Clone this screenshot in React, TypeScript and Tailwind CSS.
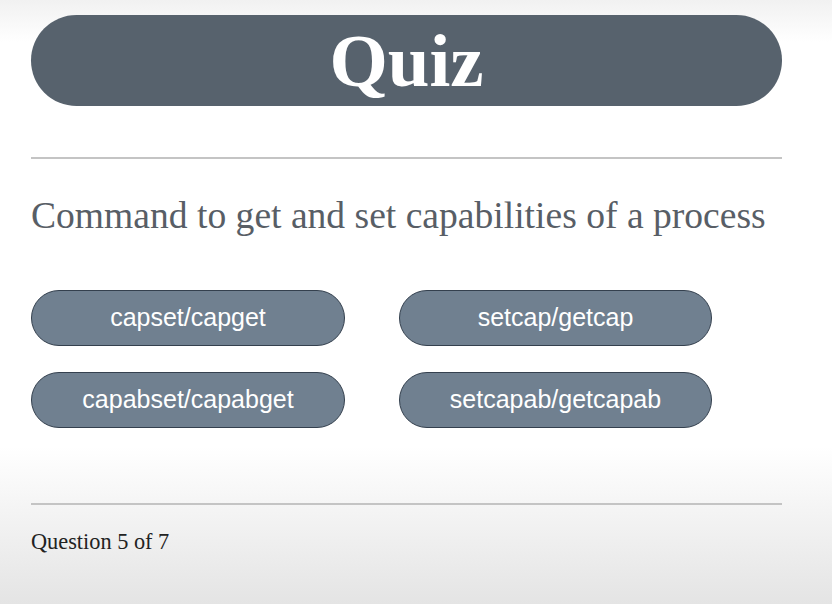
import React from "react";

const answers = [
  "capset/capget",
  "setcap/getcap",
  "capabset/capabget",
  "setcapab/getcapab",
];

export default function App() {
  return (
    <div className="w-[832px] h-[604px] overflow-hidden pl-[31px] pr-[50px] bg-[linear-gradient(to_bottom,#f1f1f1_0%,#ffffff_7%,#ffffff_74%,#e4e4e4_100%)]">
      <div className="mt-[15px] h-[91px] rounded-full bg-[#57626d] flex items-center justify-center">
        <span className="text-white font-bold text-[75px] leading-none [font-family:'Liberation_Serif',serif]">
          Quiz
        </span>
      </div>
      <div className="mt-[51px] h-[2px] bg-[#c4c4c4]" />
      <div className="mt-[37px] text-[37.6px] leading-[40px] text-[#585e66] whitespace-nowrap [font-family:'Liberation_Serif',serif]">
        Command to get and set capabilities of a process
      </div>
      <div className="mt-[54px] grid grid-cols-[314px_313px] gap-x-[54px] gap-y-[26px]">
        {answers.map((a) => (
          <button
            key={a}
            className="h-[56px] rounded-full bg-[#708090] border border-[#34404e] text-white text-[25px] [font-family:'Liberation_Sans',Arial,sans-serif] flex items-center justify-center"
          >
            {a}
          </button>
        ))}
      </div>
      <div className="mt-[75px] h-[2px] bg-[#c4c4c4]" />
      <div className="mt-[22px] text-[24px] leading-[28px] text-[#222222] whitespace-nowrap origin-left scale-x-[0.93] [font-family:'Liberation_Serif',serif]">
        Question 5 of 7
      </div>
    </div>
  );
}
